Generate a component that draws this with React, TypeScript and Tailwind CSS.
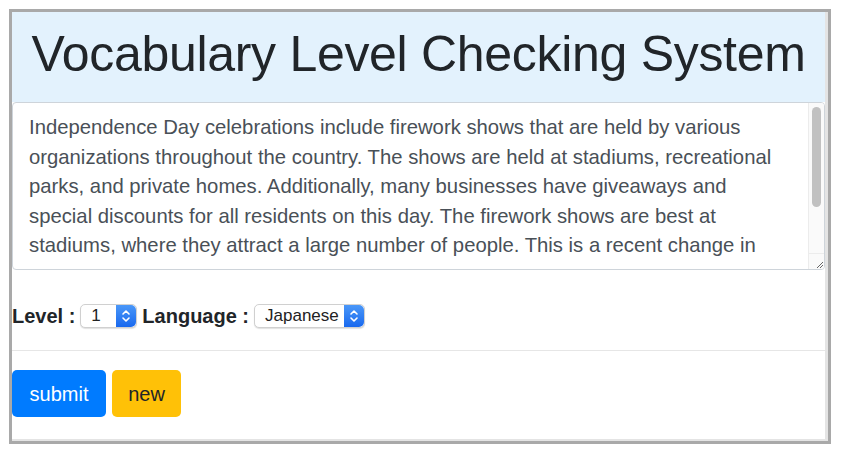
import React from "react";

const lines = [
  "Independence Day celebrations include firework shows that are held by various",
  "organizations throughout the country. The shows are held at stadiums, recreational",
  "parks, and private homes. Additionally, many businesses have giveaways and",
  "special discounts for all residents on this day. The firework shows are best at",
  "stadiums, where they attract a large number of people. This is a recent change in",
];

function Stepper() {
  return (
    <div className="w-[20px] h-full bg-gradient-to-b from-[#4a97f8] to-[#1868ee] rounded-r-[5px] flex items-center justify-center">
      <svg width="10" height="16" viewBox="0 0 10 16" fill="none" stroke="white" strokeWidth="1.6" strokeLinecap="round" strokeLinejoin="round">
        <path d="M2 6 L5 3 L8 6" />
        <path d="M2 10 L5 13 L8 10" />
      </svg>
    </div>
  );
}

function Select({ value, width }: { value: string; width: string }) {
  return (
    <div className={`${width} h-[24px] flex items-stretch rounded-[5px] border border-[#d0d0d0] bg-white shadow-[0_1px_1px_rgba(0,0,0,0.12)]`}>
      <div className="flex-1 flex items-center pl-[10px] text-[17px] text-[#222] font-['Liberation_Sans',sans-serif]">{value}</div>
      <Stepper />
    </div>
  );
}

export default function App() {
  return (
    <div className="w-[843px] h-[452px] bg-white pt-[9px] pl-[9px] font-['Liberation_Sans',Arial,sans-serif]">
      <div className="w-[822px] h-[435px] border-[3px] border-[#a9a9a9] overflow-hidden">
        <div className="h-full border-r-[3px] border-b-[2px] border-[#e4e4e4] flex flex-col">
          <div className="h-[90px] bg-[#e3f2fd] flex items-center justify-center">
            <h1 className="text-[50px] leading-none text-[#212529] tracking-[-0.3px] mb-[6px]">Vocabulary Level Checking System</h1>
          </div>
          <div className="h-[168px] border border-[#ced4da] rounded-[4px] bg-white flex overflow-hidden">
            <div className="flex-1 pl-[16px] pt-[10px] text-[20.3px] leading-[29.5px] text-[#495057] overflow-hidden whitespace-nowrap">
              {lines.map((l, i) => (
                <div key={i}>{l}</div>
              ))}
            </div>
            <div className="w-[16px] border-l border-[#ececec] bg-[#fafafa] flex flex-col items-center pt-[4px]">
              <div className="w-[9px] h-[100px] rounded-full bg-[#c1c1c1]" />
              <div className="flex-1" />
              <div className="w-full h-[16px] border-t border-[#ececec] flex items-end justify-end">
                <svg width="10" height="10" viewBox="0 0 10 10" stroke="#666" strokeWidth="1">
                  <path d="M9 3 L3 9" />
                  <path d="M9 6 L6 9" />
                </svg>
              </div>
            </div>
          </div>
          <div className="h-[81px] flex items-center gap-[5px] border-b border-[#e6e6e6] pt-[12px]">
            <span className="text-[20px] font-bold text-[#212529]">Level :</span>
            <Select value="1" width="w-[57px]" />
            <span className="text-[20px] font-bold text-[#212529]">Language :</span>
            <Select value="Japanese" width="w-[111px]" />
          </div>
          <div className="flex gap-[6px] pt-[19px]">
            <button className="w-[94px] h-[47px] rounded-[5px] bg-[#007bff] text-white text-[20px]">submit</button>
            <button className="w-[69px] h-[47px] rounded-[5px] bg-[#ffc107] text-[#212529] text-[20px]">new</button>
          </div>
        </div>
      </div>
    </div>
  );
}
